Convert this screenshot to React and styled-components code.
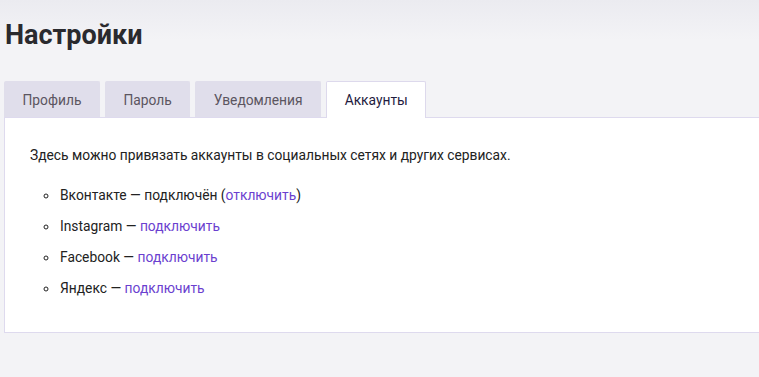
import React from 'react';
import styled, { createGlobalStyle } from 'styled-components';

const GlobalStyle = createGlobalStyle`
    html, body {
        margin: 0;
        padding: 0;
        overflow: hidden;
    }
    body {
        background: linear-gradient(to bottom, #ebebf0 0, #f3f3f6 40px, #f3f3f6 100%);
        font-family: "Roboto", "Noto Sans", sans-serif;
        color: #222;
        min-height: 377px;
    }
`

const Page = styled.div`
    width: 820px;
    padding: 17px 0 0 4px;
    box-sizing: border-box;
`

const Title = styled.h1`
    margin: 0 0 28px 1px;
    font-size: 27px;
    line-height: 36px;
    font-weight: 700;
    color: #2a2a2e;
`

const Tabs = styled.div`
    display: flex;
    gap: 5px;
    position: relative;
    z-index: 1;
`

const Tab = styled.div`
    padding: 0 17.5px;
    box-sizing: border-box;
    display: flex;
    align-items: center;
    border-radius: 2px 2px 0 0;
    font-size: 13.8px;
    cursor: pointer;
    background: ${({ $active }) => $active ? '#fff' : '#e0deeb'};
    color: ${({ $active }) => $active ? '#1f1c3f' : '#5b5560'};
    border: 1px solid ${({ $active }) => $active ? '#ddd9ec' : '#e0deeb'};
    border-bottom: none;
    height: ${({ $active }) => $active ? '37px' : '36px'};
    margin-bottom: ${({ $active }) => $active ? '-1px' : '0'};
`

const Panel = styled.div`
    background: #fff;
    border: 1px solid #dedaee;
    padding: 27px 25px 40px;
    height: 216px;
    box-sizing: border-box;
    font-size: 13.8px;
`

const Intro = styled.p`
    margin: 0 0 20px;
    line-height: 20px;
`

const List = styled.ul`
    margin: 0;
    padding: 0 0 0 29px;
    list-style: circle;
`

const Item = styled.li`
    line-height: 20px;
    margin-bottom: 11px;
    padding-left: 1px;
`

const Action = styled.a`
    color: #6b3fcf;
    text-decoration: none;
    cursor: pointer;
`

const accounts = [
    { name: 'Вконтакте', connected: true },
    { name: 'Instagram' },
    { name: 'Facebook' },
    { name: 'Яндекс' },
]

export default function App() {
    return (
        <>
            <GlobalStyle />
            <Page>
                <Title>Настройки</Title>
                <Tabs>
                    <Tab>Профиль</Tab>
                    <Tab>Пароль</Tab>
                    <Tab>Уведомления</Tab>
                    <Tab $active>Аккаунты</Tab>
                </Tabs>
                <Panel>
                    <Intro>Здесь можно привязать аккаунты в социальных сетях и других сервисах.</Intro>
                    <List>
                        {accounts.map(a => (
                            <Item key={a.name}>
                                {a.connected
                                    ? <>{a.name} — подключён (<Action>отключить</Action>)</>
                                    : <>{a.name} — <Action>подключить</Action></>}
                            </Item>
                        ))}
                    </List>
                </Panel>
            </Page>
        </>
    )
}
